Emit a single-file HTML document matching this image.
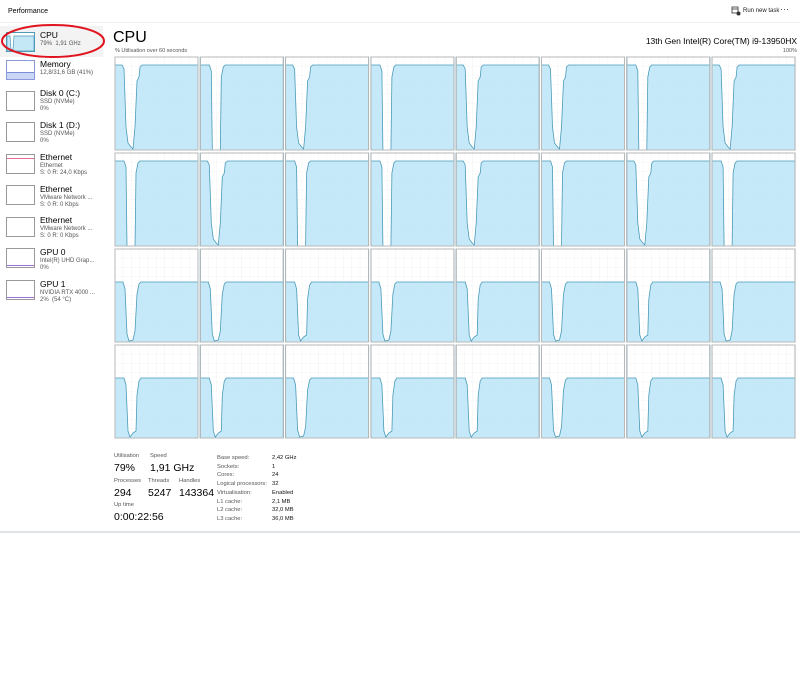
<!DOCTYPE html>
<html><head><meta charset="utf-8"><style>
*{margin:0;padding:0;box-sizing:border-box}
body{width:800px;height:675px;background:#fff;font-family:"Liberation Sans",sans-serif;color:#000;position:relative;overflow:hidden}
.a{position:absolute;white-space:nowrap;line-height:1}
.t{font-size:8.5px}
.s{font-size:6px;color:#555}
.th{position:absolute;left:6px;width:29px;height:20px;border:1px solid #999;background:#fff}
.l{font-size:5.8px;color:#555}
.v{font-size:10.5px}
</style></head><body>
<div class="a" style="left:0;top:0;width:800px;height:23px;border-bottom:1px solid #eee"></div>
<div class="a" style="left:8px;top:8px;font-size:7px">Performance</div>
<svg class="a" style="left:731px;top:6px" width="10" height="10" viewBox="0 0 10 10"><rect x="1" y="1" width="6" height="6" fill="none" stroke="#333" stroke-width="0.8"/><line x1="1" y1="3" x2="7" y2="3" stroke="#333" stroke-width="0.8"/><circle cx="7.5" cy="7.5" r="2" fill="#333"/></svg>
<div class="a" style="left:743px;top:8px;font-size:6px;color:#222">Run new task</div>
<div class="a" style="left:780px;top:5px;font-size:9px;color:#333">···</div>

<div class="a" style="left:0;top:26px;width:103px;height:31px;background:#f3f3f3"></div>
<div class="th" style="top:32px;border-color:#4a9ab8"><svg width="27" height="18"><path d="M0,18 L0,3 L3,3 L4,16 L6,17 L7,3 L27,3 L27,18Z" fill="#c4e8f6" stroke="#4a9ab8" stroke-width="0.7"/></svg></div>
<div class="a t" style="left:40px;top:31px">CPU</div><div class="a s" style="left:40px;top:41px">79%&nbsp; 1,91 GHz</div>
<div class="th" style="top:60px;border-color:#8a9ad8"><div style="position:absolute;left:0;right:0;bottom:0;height:7px;background:#c9d6f5;border-top:1px solid #7a8ed8"></div></div>
<div class="a t" style="left:40px;top:60px">Memory</div><div class="a s" style="left:40px;top:70px">12,8/31,6 GB (41%)</div>
<div class="th" style="top:91px"></div>
<div class="a t" style="left:40px;top:89px">Disk 0 (C:)</div><div class="a s" style="left:40px;top:99px">SSD (NVMe)</div><div class="a s" style="left:40px;top:106px">0%</div>
<div class="th" style="top:122px"></div>
<div class="a t" style="left:40px;top:121px">Disk 1 (D:)</div><div class="a s" style="left:40px;top:131px">SSD (NVMe)</div><div class="a s" style="left:40px;top:138px">0%</div>
<div class="th" style="top:154px"><div style="position:absolute;left:0;right:0;top:3px;height:1px;background:#e07090"></div></div>
<div class="a t" style="left:40px;top:153px">Ethernet</div><div class="a s" style="left:40px;top:163px">Ethernet</div><div class="a s" style="left:40px;top:170px">S: 0 R: 24,0 Kbps</div>
<div class="th" style="top:185px"></div>
<div class="a t" style="left:40px;top:185px">Ethernet</div><div class="a s" style="left:40px;top:195px">VMware Network ...</div><div class="a s" style="left:40px;top:202px">S: 0 R: 0 Kbps</div>
<div class="th" style="top:217px"></div>
<div class="a t" style="left:40px;top:216px">Ethernet</div><div class="a s" style="left:40px;top:226px">VMware Network ...</div><div class="a s" style="left:40px;top:233px">S: 0 R: 0 Kbps</div>
<div class="th" style="top:248px"><div style="position:absolute;left:0;right:0;bottom:1px;height:1px;background:#a070d0"></div></div>
<div class="a t" style="left:40px;top:248px">GPU 0</div><div class="a s" style="left:40px;top:258px">Intel(R) UHD Grap...</div><div class="a s" style="left:40px;top:265px">0%</div>
<div class="th" style="top:280px"><div style="position:absolute;left:0;right:0;bottom:1px;height:1px;background:#a070d0"></div></div>
<div class="a t" style="left:40px;top:280px">GPU 1</div><div class="a s" style="left:40px;top:290px">NVIDIA RTX 4000 ...</div><div class="a s" style="left:40px;top:297px">2%&nbsp; (54 °C)</div>

<svg class="a" style="left:0;top:22px" width="110" height="40"><ellipse cx="53" cy="19" rx="51" ry="16" fill="none" stroke="#e0141e" stroke-width="2"/></svg>

<div class="a" style="left:113px;top:30px;font-size:16px">CPU</div>
<div class="a" style="left:115px;top:49px;font-size:5.5px;color:#555">% Utilisation over 60 seconds</div>
<div class="a" style="right:3px;top:49px;font-size:5.5px;color:#555">100%</div>
<div class="a" style="right:3px;top:37px;font-size:8.5px">13th Gen Intel(R) Core(TM) i9-13950HX</div>

<svg class="a" style="left:0;top:0" width="800" height="450">
<defs>
<pattern id="g" x="0" y="0" width="8.3" height="9.3" patternUnits="userSpaceOnUse"><path d="M8.3,0V9.3M0,9.3H8.3" stroke="#e8e8e8" stroke-width="0.6" fill="none"/></pattern>
<g id="bg"><rect width="83" height="93" fill="#fff"/><rect width="83" height="93" fill="url(#g)"/></g>
<path id="p1" d="M0,93 L0,8 L7,8 L9,12 L11,70 L13,86 L16,90 L18,92 L20,70 L22,24 L24,20 L25,10 L27,8 L83,8 L83,93Z"/>
<path id="p2" d="M0,93 L0,8 L9,8 L11,14 L12,93 L20,93 L21,20 L23,10 L25,8 L83,8 L83,93Z"/>
<path id="p3" d="M0,93 L0,33 L8,33 L10,40 L12,85 L14,92 L18,91 L20,82 L22,45 L24,35 L26,33 L83,33 L83,93Z"/>
<path id="p4" d="M0,93 L0,33 L9,33 L11,40 L13,86 L15,92 L18,88 L21,86 L22,50 L24,36 L26,33 L83,33 L83,93Z"/>
</defs>
<g fill="#bfe7f7" fill-opacity="0.9" stroke="#4a9ab8" stroke-width="0.8">
<g>
<g transform="translate(115,57)"><use href="#bg"/><use href="#p1"/></g>
<g transform="translate(200.3,57)"><use href="#bg"/><use href="#p2"/></g>
<g transform="translate(285.6,57)"><use href="#bg"/><use href="#p1"/></g>
<g transform="translate(370.9,57)"><use href="#bg"/><use href="#p2"/></g>
<g transform="translate(456.2,57)"><use href="#bg"/><use href="#p1"/></g>
<g transform="translate(541.5,57)"><use href="#bg"/><use href="#p1"/></g>
<g transform="translate(626.8,57)"><use href="#bg"/><use href="#p2"/></g>
<g transform="translate(712.1,57)"><use href="#bg"/><use href="#p1"/></g>
</g>
<g transform="translate(0,96)">
<g transform="translate(115,57)"><use href="#bg"/><use href="#p2"/></g>
<g transform="translate(200.3,57)"><use href="#bg"/><use href="#p1"/></g>
<g transform="translate(285.6,57)"><use href="#bg"/><use href="#p2"/></g>
<g transform="translate(370.9,57)"><use href="#bg"/><use href="#p2"/></g>
<g transform="translate(456.2,57)"><use href="#bg"/><use href="#p1"/></g>
<g transform="translate(541.5,57)"><use href="#bg"/><use href="#p2"/></g>
<g transform="translate(626.8,57)"><use href="#bg"/><use href="#p1"/></g>
<g transform="translate(712.1,57)"><use href="#bg"/><use href="#p2"/></g>
</g>
<g transform="translate(0,192)">
<g transform="translate(115,57)"><use href="#bg"/><use href="#p3"/></g>
<g transform="translate(200.3,57)"><use href="#bg"/><use href="#p3"/></g>
<g transform="translate(285.6,57)"><use href="#bg"/><use href="#p4"/></g>
<g transform="translate(370.9,57)"><use href="#bg"/><use href="#p3"/></g>
<g transform="translate(456.2,57)"><use href="#bg"/><use href="#p4"/></g>
<g transform="translate(541.5,57)"><use href="#bg"/><use href="#p3"/></g>
<g transform="translate(626.8,57)"><use href="#bg"/><use href="#p4"/></g>
<g transform="translate(712.1,57)"><use href="#bg"/><use href="#p3"/></g>
</g>
<g transform="translate(0,288)">
<g transform="translate(115,57)"><use href="#bg"/><use href="#p4"/></g>
<g transform="translate(200.3,57)"><use href="#bg"/><use href="#p4"/></g>
<g transform="translate(285.6,57)"><use href="#bg"/><use href="#p3"/></g>
<g transform="translate(370.9,57)"><use href="#bg"/><use href="#p4"/></g>
<g transform="translate(456.2,57)"><use href="#bg"/><use href="#p4"/></g>
<g transform="translate(541.5,57)"><use href="#bg"/><use href="#p3"/></g>
<g transform="translate(626.8,57)"><use href="#bg"/><use href="#p4"/></g>
<g transform="translate(712.1,57)"><use href="#bg"/><use href="#p4"/></g>
</g>
</g>
<g fill="none" stroke="#b8b8b8" stroke-width="1">
<rect x="115" y="57" width="83" height="93"/><rect x="200.3" y="57" width="83" height="93"/><rect x="285.6" y="57" width="83" height="93"/><rect x="370.9" y="57" width="83" height="93"/><rect x="456.2" y="57" width="83" height="93"/><rect x="541.5" y="57" width="83" height="93"/><rect x="626.8" y="57" width="83" height="93"/><rect x="712.1" y="57" width="83" height="93"/>
<rect x="115" y="153" width="83" height="93"/><rect x="200.3" y="153" width="83" height="93"/><rect x="285.6" y="153" width="83" height="93"/><rect x="370.9" y="153" width="83" height="93"/><rect x="456.2" y="153" width="83" height="93"/><rect x="541.5" y="153" width="83" height="93"/><rect x="626.8" y="153" width="83" height="93"/><rect x="712.1" y="153" width="83" height="93"/>
<rect x="115" y="249" width="83" height="93"/><rect x="200.3" y="249" width="83" height="93"/><rect x="285.6" y="249" width="83" height="93"/><rect x="370.9" y="249" width="83" height="93"/><rect x="456.2" y="249" width="83" height="93"/><rect x="541.5" y="249" width="83" height="93"/><rect x="626.8" y="249" width="83" height="93"/><rect x="712.1" y="249" width="83" height="93"/>
<rect x="115" y="345" width="83" height="93"/><rect x="200.3" y="345" width="83" height="93"/><rect x="285.6" y="345" width="83" height="93"/><rect x="370.9" y="345" width="83" height="93"/><rect x="456.2" y="345" width="83" height="93"/><rect x="541.5" y="345" width="83" height="93"/><rect x="626.8" y="345" width="83" height="93"/><rect x="712.1" y="345" width="83" height="93"/>
</g>
</svg>

<div class="a l" style="left:114px;top:454px">Utilisation</div><div class="a l" style="left:150px;top:454px">Speed</div>
<div class="a v" style="left:114px;top:463px">79%</div><div class="a v" style="left:150px;top:463px">1,91 GHz</div>
<div class="a l" style="left:114px;top:479px">Processes</div><div class="a l" style="left:148px;top:479px">Threads</div><div class="a l" style="left:179px;top:479px">Handles</div>
<div class="a v" style="left:114px;top:488px">294</div><div class="a v" style="left:148px;top:488px">5247</div><div class="a v" style="left:179px;top:488px">143364</div>
<div class="a l" style="left:114px;top:503px">Up time</div>
<div class="a v" style="left:114px;top:512px">0:00:22:56</div>

<div class="a l" style="left:217px;top:454px;line-height:8.7px">Base speed:<br>Sockets:<br>Cores:<br>Logical processors:<br>Virtualisation:<br>L1 cache:<br>L2 cache:<br>L3 cache:</div>
<div class="a l" style="left:272px;top:454px;line-height:8.7px;color:#111">2,42 GHz<br>1<br>24<br>32<br>Enabled<br>2,1 MB<br>32,0 MB<br>36,0 MB</div>

<div class="a" style="left:0;top:531px;width:800px;height:2px;background:#dfe3e6"></div>
</body></html>
